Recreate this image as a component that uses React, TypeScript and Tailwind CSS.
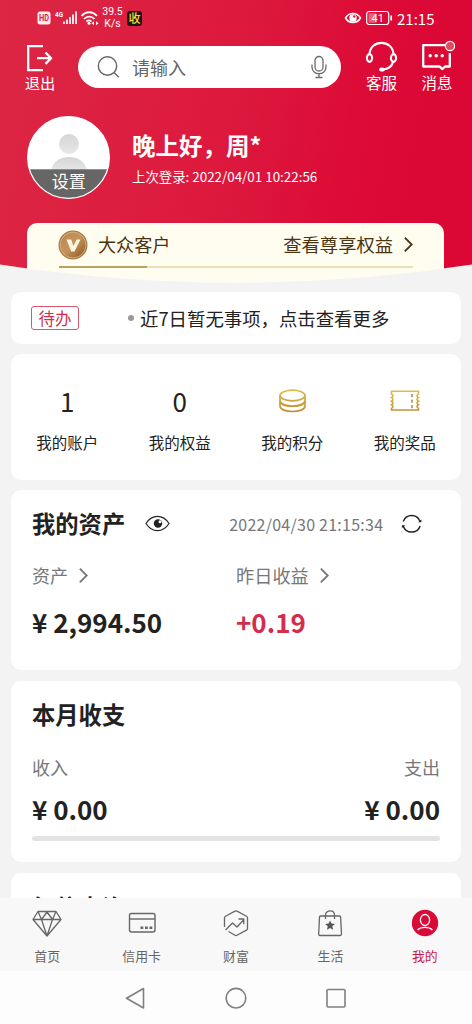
import React from "react";

type IconProps = { className?: string };

const Chevron = ({ className = "" }: IconProps) => (
  <svg viewBox="0 0 12 18" fill="none" stroke="currentColor" strokeWidth="2" className={className}>
    <path d="M2 1.5 L9.5 9 L2 16.5" />
  </svg>
);

function StatusBar() {
  return (
    <div className="flex h-9 items-center pl-[37px] pr-[37px] text-white">
      <svg className="h-[24px] w-[64px] shrink-0" viewBox="0 0 64 24" fill="none">
        <rect x="0.5" y="5.5" width="13" height="13" rx="2.5" fill="#fff" fillOpacity="0.92" />
        <text x="7" y="15.2" textAnchor="middle" fontSize="8.5" fontWeight="700" fill="#dc2443" fontFamily="Roboto, sans-serif" textLength="10" lengthAdjust="spacingAndGlyphs">HD</text>
        <text x="18" y="11" fontSize="7.5" fontWeight="700" fill="#fff" fontFamily="Roboto, sans-serif" textLength="8" lengthAdjust="spacingAndGlyphs">4G</text>
        <path d="M27 18v-2.5M30 18v-4.5M33 18v-7M36 18V8.500M39 18V5.500" stroke="#fff" strokeWidth="1.7" />
        <g stroke="#fff" strokeWidth="1.8">
          <path d="M44.500 10c4.500-5 11-5 15.500 0" />
          <path d="M47 13c3-3.200 7.500-3.200 10.500 0" />
          <path d="M49.500 15.500c1.800-1.600 3.700-1.600 5 0" />
        </g>
        <circle cx="52" cy="17.200" r="1.500" fill="#fff" />
        <path d="M54.500 17.200l2.500-2v4zM61.500 17.200l-2.500-2v4z" fill="#fff" />
      </svg>
      <div className="ml-[1px] w-[21px] text-center font-['Roboto'] text-[10.500px] leading-[12px]">
        <div className="whitespace-nowrap">39.5</div>
        <div>K/s</div>
      </div>
      <div className="ml-[4px] flex h-[15px] w-[15px] items-center justify-center rounded-[3px] bg-[#1c1712] text-[12px] font-medium leading-none text-[#f5d73c]">
        收
      </div>
      <div className="grow" />
      <svg className="h-4 w-[18px]" viewBox="0 0 18 16" fill="none" stroke="#fff" strokeWidth="1.500">
        <path d="M1.500 8C5 2 13 2 16.500 8 13 14 5 14 1.500 8Z" />
        <circle cx="9" cy="8" r="3.700" fill="#fff" stroke="none" />
        <circle cx="10.200" cy="6.500" r="1.200" fill="#dc1c3d" stroke="none" />
      </svg>
      <svg className="ml-[4px] h-[16px] w-[27px]" viewBox="0 0 27 16" fill="none">
        <rect x="0.700" y="1.500" width="22" height="13" rx="2.500" stroke="#fff" strokeWidth="1.200" />
        <rect x="2.500" y="3.300" width="8" height="9.400" fill="#fff" fillOpacity="0.350" />
        <text x="11.700" y="12" textAnchor="middle" fontSize="11" fill="#fff" fontFamily="Roboto, sans-serif">41</text>
        <path d="M25.200 5.500v5" stroke="#fff" strokeWidth="1.700" />
      </svg>
      <span className="ml-[4px] w-[38px] whitespace-nowrap text-[15px] leading-none">21:15</span>
    </div>
  );
}

function TopNav() {
  return (
    <div className="flex h-[64px] text-white">
      <div className="flex w-[78px] flex-col items-center pl-[2px] pt-[8px]">
        <svg className="h-[28px] w-[28px]" viewBox="0 0 28 28" fill="none" stroke="#fff" strokeWidth="2.300">
          <path d="M17 2.200H2.200v24H17" />
          <path d="M11 14.200h14M19.500 8.500l5.500 5.700-5.500 5.700" />
        </svg>
        <span className="mt-[1px] text-[15.300px] leading-[18px]">退出</span>
      </div>
      <div className="mt-[10px] flex h-[42px] w-[263px] items-center rounded-full bg-white pl-[19px] pr-[14px]">
        <svg className="h-[24px] w-[24px]" viewBox="0 0 24 24" fill="none" stroke="#666" strokeWidth="1.400">
          <circle cx="10.500" cy="11" r="9.200" />
          <path d="M17 17.500l4.800 4.700" />
        </svg>
        <span className="ml-[11px] text-[18px] leading-none text-[#666]">请输入</span>
        <div className="grow" />
        <svg className="h-[24px] w-[16px]" viewBox="0 0 16 24" fill="none" stroke="#6a6a6a" strokeWidth="1.300">
          <rect x="4" y="1.500" width="8" height="14.500" rx="4" />
          <path d="M1 9.500v2.500c0 9 14 9 14 0V9.500M8 18.800v3.500M4.500 22.500h7" />
        </svg>
      </div>
      <div className="flex w-[81px] flex-col items-center pt-[5px]">
        <svg className="h-[31px] w-[34px]" viewBox="0 0 34 31" fill="none" stroke="#fff" strokeWidth="2.100">
          <path d="M4.500 13.500C5 -2 28 -2 28.500 13.500" />
          <ellipse cx="4.500" cy="17" rx="2.600" ry="3.900" />
          <ellipse cx="28.500" cy="17" rx="2.600" ry="3.900" />
          <path d="M28 21C27 25 23 28 18 28.500" />
          <ellipse cx="17" cy="28.500" rx="2.800" ry="2" fill="#fff" stroke="none" />
        </svg>
        <span className="mt-[1px] text-[15.500px] leading-[18px]">客服</span>
      </div>
      <div className="flex w-[30px] flex-col items-center pt-[4px]">
        <svg className="h-[32px] w-[36px] shrink-0" viewBox="0 0 36 32" fill="none">
          <path d="M26 5.200H4.200V26.500H20.500L23.500 29 26 26.500H30.800V13" stroke="#fff" strokeWidth="2.300" strokeLinejoin="round" />
          <g fill="#fff">
            <circle cx="11.200" cy="15.800" r="1.700" />
            <circle cx="17.200" cy="15.800" r="1.700" />
            <circle cx="23.200" cy="15.800" r="1.700" />
          </g>
          <circle cx="31" cy="6" r="4.600" fill="#e04a62" stroke="#fff" strokeWidth="1.200" />
        </svg>
        <span className="mt-[1px] whitespace-nowrap text-[15.500px] leading-[18px]">消息</span>
      </div>
    </div>
  );
}

function Profile() {
  return (
    <div className="mt-[16px] flex h-[107px] pl-[27px] text-white">
      <svg className="h-[83px] w-[83px]" viewBox="0 0 83 83">
        <defs>
          <clipPath id="avatar">
            <circle cx="41.500" cy="41.500" r="41" />
          </clipPath>
          <linearGradient id="person" x1="0" y1="0" x2="0" y2="1">
            <stop offset="0" stopColor="#d5d5d5" />
            <stop offset="1" stopColor="#e8e8e8" />
          </linearGradient>
        </defs>
        <circle cx="41.500" cy="41.500" r="41" fill="#fff" />
        <g clipPath="url(#avatar)">
          <circle cx="42" cy="28" r="10" fill="url(#person)" />
          <path d="M24 56c1-20 35-20 36 0z" fill="url(#person)" />
          <rect y="53.300" width="83" height="30" fill="#666" />
        </g>
        <circle cx="41.500" cy="41.500" r="40.800" fill="none" stroke="#fff" strokeWidth="1.300" />
        <text x="41.800" y="71.500" textAnchor="middle" fontSize="17" fill="#fff">设置</text>
      </svg>
      <div className="ml-[22px] flex flex-col">
        <div className="mt-[15px] whitespace-nowrap text-[23.500px] font-bold leading-[28px]">晚上好，周*</div>
        <div className="mt-[8px] whitespace-nowrap text-[13.400px] leading-[18px]">上次登录: 2022/04/01 10:22:56</div>
      </div>
    </div>
  );
}

function Membership() {
  return (
    <div className="mx-[27px] h-[69px] w-[417px] rounded-t-[10px] bg-[#fffdf0] px-[32px] text-[#4c3311]">
      <div className="flex h-[43px] items-center">
        <svg className="-ml-[1px] h-[30px] w-[30px]" viewBox="0 0 30 30">
          <defs>
            <linearGradient id="medal" x1="0" y1="0" x2="1" y2="1">
              <stop offset="0" stopColor="#bd8851" />
              <stop offset="0.500" stopColor="#c4935c" />
              <stop offset="1" stopColor="#85521f" />
            </linearGradient>
          </defs>
          <circle cx="15" cy="15" r="14.500" fill="#a87a48" />
          <circle cx="15" cy="15" r="12.900" fill="url(#medal)" stroke="#dfba85" strokeWidth="0.800" />
          <path d="M8.500 9.500h4.700l2.200 6.500 3.300-6.500h3.800L16.500 21.500h-3.300z" fill="#fff4df" />
        </svg>
        <span className="ml-[10px] text-[18.100px] leading-none">大众客户</span>
        <div className="grow" />
        <span className="text-[18.300px] leading-none">查看尊享权益</span>
        <Chevron className="-mr-[2px] ml-[10px] h-[17px] w-[11px]" />
      </div>
      <div className="h-[2px] w-[354px] bg-[#eadfb8]">
        <div className="h-[2px] w-[88px] bg-[#b9a160]" />
      </div>
    </div>
  );
}

const shortcuts = [
  { label: "我的账户", icon: <span>1</span> },
  { label: "我的权益", icon: <span>0</span> },
  {
    label: "我的积分",
    icon: (
      <svg className="h-[28px] w-[30px]" viewBox="0 0 30 28" fill="none" stroke="url(#gold)" strokeWidth="1.700">
        <defs>
          <linearGradient id="gold" gradientUnits="userSpaceOnUse" x1="0" y1="2" x2="0" y2="26">
            <stop offset="0" stopColor="#dfbd4b" />
            <stop offset="1" stopColor="#bd8b32" />
          </linearGradient>
        </defs>
        <ellipse cx="15.500" cy="8.500" rx="12.500" ry="5.300" />
        <path d="M3 8.500v5c0 7.300 25 7.300 25 0v-5" />
        <path d="M3 14v5c0 7.300 25 7.300 25 0v-5" />
        <path d="M3 15c2 6 23 6 25 0" strokeWidth="1.100" />
      </svg>
    ),
  },
  {
    label: "我的奖品",
    icon: (
      <svg className="h-[26px] w-[32px]" viewBox="0 0 32 26" fill="none" stroke="url(#gold)" strokeWidth="1.600">
        <path d="M2.500 3.300V6q3 1.800 0 3.600q3 1.800 0 3.600q3 1.800 0 3.600q3 1.800 0 3.600V22H29.500V20.400q-3-1.800 0-3.600q-3-1.800 0-3.600q-3-1.800 0-3.600q-3-1.800 0-3.600V3.300Z" />
        <path d="M23 6v14.500M23.010 6v14.500" stroke="#b9913f" strokeDasharray="3.300 2.200" />
      </svg>
    ),
  },
];

const tabs = [
  {
    label: "首页",
    icon: (
      <svg className="h-[30px] w-[32px]" viewBox="0 0 32 30" fill="none" stroke="#666" strokeWidth="1.300" strokeLinejoin="round">
        <path d="M7 3.500H25L30 11.500 16 28 2 11.500ZM2 11.500H30M7 3.500L10.500 11.500 16 4 21.500 11.500 25 3.500M10.500 11.500L16 28 21.500 11.500" />
      </svg>
    ),
  },
  {
    label: "信用卡",
    icon: (
      <svg className="h-[30px] w-[32px]" viewBox="0 0 32 30" fill="none" stroke="#666" strokeWidth="1.400">
        <rect x="3.500" y="5.500" width="25.500" height="18.500" rx="2" />
        <path d="M3.500 11h25.500" />
        <path d="M14.500 19.800h2.800M19 19.800h2.800M23.500 19.800h2.800" strokeWidth="2.500" />
      </svg>
    ),
  },
  {
    label: "财富",
    icon: (
      <svg className="h-[30px] w-[32px]" viewBox="0 0 32 30" fill="none" stroke="#666" strokeWidth="1.300" strokeLinejoin="round">
        <path d="M4.500 19V9.800q0-1 1-1.600L15 3.100q1-.6 2 0l9.500 5.100q1 .6 1 1.600v10.700q0 1-1 1.600L17 27.300q-1 .6-2 0L8.500 23.500" />
        <path d="M5.500 22l7-7 4.500 4L24 11.500M18.500 11h5.300v5.300" />
      </svg>
    ),
  },
  {
    label: "生活",
    icon: (
      <svg className="h-[30px] w-[32px]" viewBox="0 0 32 30" fill="none" stroke="#666" strokeWidth="1.300" strokeLinejoin="round">
        <path d="M6.500 8h19q1 0 1.100 1L27.500 26q0 1.500-1.300 1.500H6q-1.400 0-1.300-1.500L5.500 9q0-1 1-1Z" />
        <path d="M11.500 11V7c0-5.500 9-5.500 9 0v4" />
        <path fill="#555" stroke="none" d="M16 12.500l1.400 3.100 3.400.4-2.500 2.300.7 3.400-3-1.700-3 1.700.7-3.400-2.500-2.300 3.400-.4z" />
      </svg>
    ),
  },
  {
    label: "我的",
    active: true,
    icon: (
      <svg className="h-[30px] w-[32px]" viewBox="0 0 32 30" fill="none" stroke="#fff" strokeWidth="1.300">
        <circle cx="16" cy="15" r="13.200" fill="#da0a36" stroke="none" />
        <ellipse cx="16" cy="12" rx="4.600" ry="5.500" />
        <path d="M8.500 22C12 18.500 20 18.500 23.500 22" />
      </svg>
    ),
  },
];

export default function App() {
  return (
    <div className="flex h-[1024px] w-[472px] flex-col overflow-hidden bg-[#f3f3f3] font-['Noto_Sans_CJK_SC',sans-serif] text-[#222]">
      <header className="relative h-[292px] shrink-0 bg-[linear-gradient(100deg,#dc2644_0%,#dd1a3e_45%,#dc0a36_75%,#db0633_100%)]">
        <StatusBar />
        <TopNav />
        <Profile />
        <Membership />
        <svg className="absolute bottom-0 left-0 h-[30px] w-[472px]" viewBox="0 0 472 30">
          <path d="M0 2.500Q236 39 472 2.500V30H0Z" fill="#f3f3f3" />
        </svg>
      </header>

      <main className="flex h-[606px] shrink-0 flex-col gap-[10px] overflow-hidden px-[11px]">
        <section className="flex h-[52px] shrink-0 items-center rounded-[10px] bg-white pl-[20px]">
          <span className="flex h-[24px] w-[48px] items-center justify-center rounded-[3px] border border-[#d7566e] text-[16.500px] leading-none text-[#d3304f]">
            待办
          </span>
          <span className="ml-[49px] h-[6px] w-[6px] rounded-full bg-[#999]" />
          <span className="ml-[6px] whitespace-nowrap text-[18.400px] leading-none">近7日暂无事项，点击查看更多</span>
        </section>

        <section className="grid h-[126px] shrink-0 grid-cols-4 rounded-[10px] bg-white pt-[31px]">
          {shortcuts.map((s) => (
            <div key={s.label} className="flex flex-col items-center">
              <div className="flex h-[32px] items-center text-[26px] leading-none">{s.icon}</div>
              <div className="mt-[15px] text-[15.500px] leading-[20px]">{s.label}</div>
            </div>
          ))}
        </section>

        <section className="h-[180px] shrink-0 rounded-[10px] bg-white px-[21px] pt-[18px]">
          <div className="flex h-[32px] items-center">
            <h2 className="text-[23.300px] font-bold leading-none">我的资产</h2>
            <svg className="ml-[20px] h-[18px] w-[26px]" viewBox="0 0 26 18" fill="none" stroke="#222" strokeWidth="1.200">
              <path d="M1 8.500C7-1 18-1 24 8.500 18 18 7 18 1 8.500Z" />
              <circle cx="13" cy="8.500" r="4.200" fill="#222" stroke="none" />
              <circle cx="15" cy="6.800" r="1.500" fill="#fff" stroke="none" />
            </svg>
            <span className="ml-[58px] w-[154px] whitespace-nowrap text-[16px] leading-none tracking-[0.250px] text-[#777]">2022/04/30 21:15:34</span>
            <svg className="ml-[18px] h-[22px] w-[22px]" viewBox="0 0 22 22" fill="none" stroke="#222" strokeWidth="1.500">
              <path d="M2.200 8.500A8.900 8.900 0 0 1 19.100 8.500M19.100 13A8.900 8.900 0 0 1 2.200 13" />
              <path d="M17 9.200h3.400v-2.700zM4.300 12.300h-3.400v2.700z" fill="#222" stroke="none" />
            </svg>
          </div>
          <div className="mt-[19px] grid grid-cols-[204px_1fr]">
            <div>
              <div className="flex h-[32px] items-center text-[18px] leading-none text-[#777]">
                资产 <Chevron className="ml-[10px] h-[17px] w-[11px]" />
              </div>
              <div className="mt-[15px] whitespace-nowrap text-[26px] font-bold leading-[32px]">¥ 2,994.50</div>
            </div>
            <div>
              <div className="flex h-[32px] items-center text-[18.200px] leading-none text-[#777]">
                昨日收益 <Chevron className="ml-[10px] h-[17px] w-[11px]" />
              </div>
              <div className="mt-[15px] whitespace-nowrap text-[26px] font-bold leading-[32px] text-[#d62c4c]">+0.19</div>
            </div>
          </div>
        </section>

        <section className="mt-[1px] h-[181px] shrink-0 rounded-[10px] bg-white px-[21px] pt-[17px]">
          <h2 className="text-[23.300px] font-bold leading-[32px]">本月收支</h2>
          <div className="mt-[24px] flex justify-between text-[18px] leading-[26px] text-[#777]">
            <span>收入</span>
            <span>支出</span>
          </div>
          <div className="mt-[13px] flex justify-between text-[26px] font-bold leading-[32px]">
            <span>¥ 0.00</span>
            <span>¥ 0.00</span>
          </div>
          <div className="mt-[11px] h-[5px] rounded-full bg-[#e3e3e3]" />
        </section>

        <section className="mt-[1px] h-[120px] shrink-0 rounded-[10px] bg-white px-[21px] pt-[18px]">
          <h2 className="text-[23.300px] font-bold leading-[32px]">征信查询</h2>
        </section>
      </main>

      <nav className="grid h-[73px] shrink-0 grid-cols-5 bg-[#f8f8f8] pt-[10px]">
        {tabs.map((t) => (
          <div key={t.label} className={t.active ? "flex flex-col items-center text-[#c9184a]" : "flex flex-col items-center text-[#666]"}>
            {t.icon}
            <span className="mt-[9px] text-[12.900px] leading-[18px]">{t.label}</span>
          </div>
        ))}
      </nav>

      <div className="flex h-[53px] shrink-0 items-center justify-center gap-[76px] bg-[#fdfdfd]">
        <svg className="h-6 w-6" viewBox="0 0 24 24" fill="none" stroke="#808080" strokeWidth="1.600" strokeLinejoin="round">
          <path d="M19.500 2.500V22L2.500 12.200Z" />
        </svg>
        <svg className="h-6 w-6" viewBox="0 0 24 24" fill="none" stroke="#808080" strokeWidth="1.600">
          <circle cx="12" cy="12.200" r="9.800" />
        </svg>
        <svg className="h-6 w-6" viewBox="0 0 24 24" fill="none" stroke="#808080" strokeWidth="1.600">
          <rect x="3" y="3.500" width="18" height="17.500" rx="1" />
        </svg>
      </div>
    </div>
  );
}
